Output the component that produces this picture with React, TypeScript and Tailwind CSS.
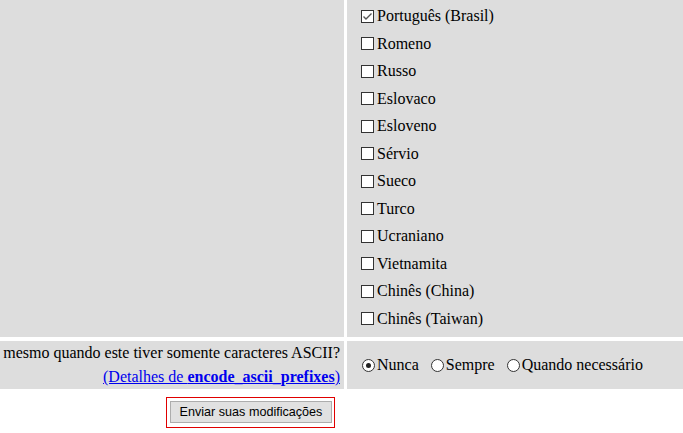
import React from "react";

const langs: [string, boolean][] = [
  ["Português (Brasil)", true],
  ["Romeno", false],
  ["Russo", false],
  ["Eslovaco", false],
  ["Esloveno", false],
  ["Sérvio", false],
  ["Sueco", false],
  ["Turco", false],
  ["Ucraniano", false],
  ["Vietnamita", false],
  ["Chinês (China)", false],
  ["Chinês (Taiwan)", false],
];

function Box({ checked }: { checked: boolean }) {
  return (
    <span className="relative w-[13px] h-[13px] shrink-0 border border-[#333333] bg-white box-border">
      {checked && (
        <svg className="absolute left-0 top-0" width="11" height="11" viewBox="0 0 11 11">
          <path d="M1.5 5.5 L4 8 L9.5 2.5" fill="none" stroke="#555555" strokeWidth="1.4" />
        </svg>
      )}
    </span>
  );
}

function Radio({ checked }: { checked: boolean }) {
  return (
    <span className="relative w-[13px] h-[13px] shrink-0 rounded-full border border-[#333333] bg-white box-border flex items-center justify-center">
      {checked && <span className="w-[5px] h-[5px] rounded-full bg-[#222222]" />}
    </span>
  );
}

export default function App() {
  return (
    <div className="w-[683px] h-[433px] overflow-hidden bg-white text-black font-['Liberation_Serif',serif] text-[16px] flex flex-col">
      <div className="flex gap-[3px] h-[337px] shrink-0">
        <div className="w-[344px] shrink-0 bg-[#dddddd]" />
        <div className="flex-1 bg-[#dddddd] pl-[14px] pt-[2.5px] flex flex-col">
          {langs.map(([l, c]) => (
            <div key={l} className="h-[27.5px] flex items-center gap-[3px] shrink-0">
              <Box checked={c} />
              <span className="leading-normal whitespace-nowrap">{l}</span>
            </div>
          ))}
        </div>
      </div>
      <div className="flex gap-[3px] h-[48px] mt-[4px] shrink-0">
        <div className="w-[344px] shrink-0 bg-[#dddddd] overflow-hidden flex flex-col justify-center items-end pr-[4px] text-right whitespace-nowrap leading-normal">
          <div>mesmo quando este tiver somente caracteres ASCII?</div>
          <div>
            <a href="#" className="text-[#0000ee] underline">
              (Detalhes de <b>encode_ascii_prefixes</b>)
            </a>
          </div>
        </div>
        <div className="flex-1 bg-[#dddddd] flex items-center pl-[15px] gap-[12px] whitespace-nowrap leading-normal">
          <div className="flex items-center gap-[2px]">
            <Radio checked={true} />
            <span>Nunca</span>
          </div>
          <div className="flex items-center gap-[2px]">
            <Radio checked={false} />
            <span>Sempre</span>
          </div>
          <div className="flex items-center gap-[2px]">
            <Radio checked={false} />
            <span>Quando necessário</span>
          </div>
        </div>
      </div>
      <div className="pl-[166px] pt-[8px]">
        <div className="w-[169px] h-[31px] border border-[#e00000] pt-[3px] pb-[4px] pl-[3px] pr-[2px] box-border">
          <button className="w-full h-full bg-[#e1e1e1] border border-[#adadad] font-['Liberation_Sans',sans-serif] text-[12.6px] text-black leading-none flex items-center justify-center">
            Enviar suas modificações
          </button>
        </div>
      </div>
    </div>
  );
}
